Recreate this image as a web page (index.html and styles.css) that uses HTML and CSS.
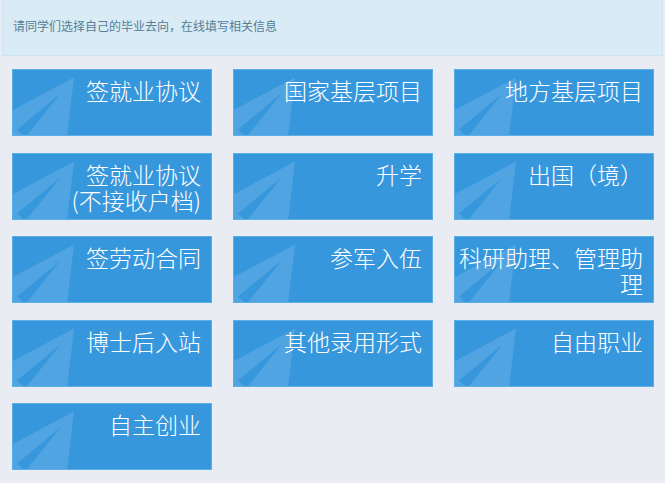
FILE: index.html
```html
<!DOCTYPE html>
<html lang="zh">
<head>
    <meta charset="UTF-8">
    <title>毕业去向</title>
    <link rel="stylesheet" href="styles.css">
</head>
<body>
    <!-- 纸飞机底纹 -->
    <svg width="0" height="0" class="defs">
        <symbol id="plane" viewBox="0 0 200 67">
            <path fill="#fff" fill-opacity="0.13" fill-rule="evenodd"
                  d="M0 40 L61 7.5 L54 67 L0 67 Z M47.5 23.5 L4 59.5 L12.5 67 Z"/>
        </symbol>
    </svg>

    <div class="notice">请同学们选择自己的毕业去向，在线填写相关信息</div>

    <div class="tiles">
        <a class="tile"><svg class="plane"><use href="#plane"/></svg>签就业协议</a>
        <a class="tile"><svg class="plane"><use href="#plane"/></svg>国家基层项目</a>
        <a class="tile"><svg class="plane"><use href="#plane"/></svg>地方基层项目</a>
        <a class="tile"><svg class="plane"><use href="#plane"/></svg>签就业协议<br>(不接收户档)</a>
        <a class="tile"><svg class="plane"><use href="#plane"/></svg>升学</a>
        <a class="tile"><svg class="plane"><use href="#plane"/></svg>出国（境）</a>
        <a class="tile"><svg class="plane"><use href="#plane"/></svg>签劳动合同</a>
        <a class="tile"><svg class="plane"><use href="#plane"/></svg>参军入伍</a>
        <a class="tile"><svg class="plane"><use href="#plane"/></svg>科研助理、管理助理</a>
        <a class="tile"><svg class="plane"><use href="#plane"/></svg>博士后入站</a>
        <a class="tile"><svg class="plane"><use href="#plane"/></svg>其他录用形式</a>
        <a class="tile"><svg class="plane"><use href="#plane"/></svg>自由职业</a>
        <a class="tile"><svg class="plane"><use href="#plane"/></svg>自主创业</a>
    </div>
</body>
</html>
```

FILE: styles.css
```css
body {
    margin: 0;
    background: #e9ecf3;
    font-family: "Noto Sans CJK SC", "Noto Sans", sans-serif;
}

.notice {
    margin: 0 2px;
    height: 56px;
    box-sizing: border-box;
    padding: 18px 10px 0;
    background: #d9ecf6;
    border: 1px solid #cce4f1;
    border-top: none;
    color: #557d95;
    font-size: 12px;
    line-height: 16px;
}

.tiles {
    display: grid;
    grid-template-columns: repeat(3, 200px);
    column-gap: 21px;
    row-gap: 16.6px;
    padding: 13px 0 0 12px;
}

.tile {
    position: relative;
    height: 67px;
    box-sizing: border-box;
    padding: 7px 10px 0 2px;
    background: #3797dd;
    border: 1px solid #5caee6;
    color: #fff;
    font-size: 23px;
    font-weight: 300;
    line-height: 26px;
    text-align: right;
    overflow: hidden;
}

.plane {
    position: absolute;
    left: 0;
    top: 0;
    width: 200px;
    height: 67px;
}

.defs {
    position: absolute;
}
```
